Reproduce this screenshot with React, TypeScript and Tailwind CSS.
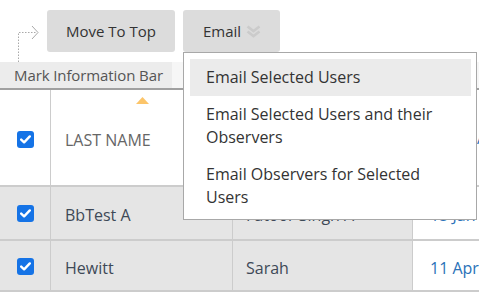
import { useState } from "react";

const font = { fontFamily: '"Open Sans", "Liberation Sans", sans-serif' };

function Check() {
  return (
    <div className="flex h-[17px] w-[17px] items-center justify-center rounded-[3px] bg-[#1573e6]">
      <svg width="11" height="9" viewBox="0 0 11 9">
        <path d="M1.2 4.6 L4.1 7.3 L9.8 1.4" fill="none" stroke="white" strokeWidth="2.4" strokeLinecap="round" strokeLinejoin="round" />
      </svg>
    </div>
  );
}

const rows = [
  { last: "BbTest A", first: "Fatoor Singh A", date: "15 Jan 2019", h: "h-[54px]" },
  { last: "Hewitt", first: "Sarah", date: "11 Apr 2019", h: "h-[51px]" },
];

const items = [
  "Email Selected Users",
  "Email Selected Users and their Observers",
  "Email Observers for Selected Users",
];

export default function App() {
  const [active] = useState(0);

  return (
    <div className="relative h-[297px] w-[479px] overflow-hidden bg-white" style={font}>
      {/* toolbar */}
      <div className="flex h-[62px] items-start">
        <div className="h-[62px] w-[47px]">
          <svg width="47" height="62" viewBox="0 0 47 62">
            <path d="M18.5 62 V32.5 H36" fill="none" stroke="#a9a9a9" strokeWidth="1" strokeDasharray="1.5 1.5" />
            <path d="M32 26 L38 32.5 L32 39" fill="none" stroke="#a9a9a9" strokeWidth="1" />
          </svg>
        </div>
        <button className="mt-[10px] h-[42px] w-[128px] rounded-[3px] bg-[#dcdcdc] text-[15px] text-[#333]">
          Move To Top
        </button>
        <button className="mt-[10px] ml-[8px] flex h-[42px] w-[97px] items-center rounded-[3px] bg-[#dcdcdc] pl-[20px] text-[15px] text-[#333]">
          Email
          <svg className="ml-[5px] mt-[1px]" width="15" height="13" viewBox="0 0 15 13">
            <path d="M1.5 1.5 L7.5 6 L13.5 1.5 M1.5 6.5 L7.5 11 L13.5 6.5" fill="none" stroke="#cbcbcb" strokeWidth="2.6" />
          </svg>
        </button>
      </div>

      {/* mark information bar */}
      <div className="flex h-[28px] border-b-2 border-[#a0a0a0] bg-[#f6f6f6]">
        <div className="flex w-[172px] items-center bg-[#ececec] pl-[14px] text-[15px] tracking-[-0.1px] text-[#555]">
          Mark Information Bar
        </div>
      </div>

      {/* table */}
      <div className="grid grid-cols-[51px_182px_180px_1fr]">
        <div className="flex h-[97px] items-center justify-center border-r border-b-2 border-[#cccccc] pt-[3px]">
          <Check />
        </div>
        <div className="relative flex h-[97px] items-center border-r border-b-2 border-[#cccccc] pl-[14px] pt-[4px] text-[16px] text-[#666]">
          LAST NAME
          <svg className="absolute top-[7px] left-[85px]" width="13" height="7" viewBox="0 0 13 7">
            <path d="M0 7 L6.5 0 L13 7 Z" fill="#fcc56a" />
          </svg>
        </div>
        <div className="h-[97px] border-r border-b-2 border-[#cccccc]"></div>
        <div className="flex h-[97px] items-center border-b-2 border-[#cccccc] pl-[64px] text-[16px] text-[#2a72b8]">
          A
        </div>
        {rows.map((r) => (
          <>
            <div key={r.last + "c"} className={`flex ${r.h} items-center justify-center border-r border-b-2 border-[#cccccc] bg-[#e5e5e5] pt-[1px]`}>
              <Check />
            </div>
            <div key={r.last + "l"} className={`flex ${r.h} items-center border-r border-b-2 border-[#cccccc] bg-[#e5e5e5] pl-[14px] pt-[4px] text-[16px] text-[#3e4957]`}>
              {r.last}
            </div>
            <div key={r.last + "f"} className={`flex ${r.h} items-center border-r border-b-2 border-[#cccccc] bg-[#e5e5e5] pl-[13px] pt-[4px] text-[16px] text-[#3e4957]`}>
              {r.first}
            </div>
            <div key={r.last + "d"} className={`flex ${r.h} items-center overflow-hidden whitespace-nowrap border-b-2 border-[#cccccc] pl-[17px] pt-[4px] text-[16px] text-[#2a72b8]`}>
              {r.date}
            </div>
          </>
        ))}
      </div>

      {/* dropdown */}
      <div className="absolute top-[52px] left-[183px] w-[294px] border border-[#a8a8a8] bg-white pt-[6px] pr-[5px] pb-[3px] pl-[6px]">
        {items.map((t, i) => (
          <div
            key={t}
            className={`px-[16px] py-[7px] text-[16px] leading-[23px] text-[#333] ${i === active ? "bg-[#ebebeb]" : ""}`}
          >
            {t}
          </div>
        ))}
      </div>
    </div>
  );
}
